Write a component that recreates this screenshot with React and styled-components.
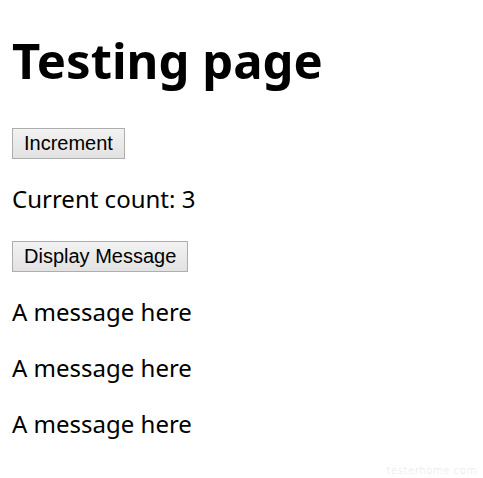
import React, { useState } from 'react';
import styled, { createGlobalStyle } from 'styled-components';

const GlobalStyle = createGlobalStyle`
  body {
    margin: 0 12px;
    background: #fff;
    color: #000;
    font-family: "Noto Sans", "Open Sans", sans-serif;
    font-size: 24px;
    line-height: 32px;
  }
`

const Title = styled.h1`
    font-size: 49px;
    line-height: 56px;
    font-weight: 700;
    margin: 32px 0 40px;
`

// margin-top collapses with the paragraph above, so $gap is the full space
const Button = styled.button`
    display: block;
    margin-top: ${p => p.$gap || 0}px;
    font-family: "Liberation Sans", Arial, sans-serif;
    font-size: 20px;
    line-height: 23px;
    height: 31px;
    padding: 0 11px;
    color: #000;
    background: linear-gradient(#f2f2f2, #e2e2e2);
    border: 1px solid #adadad;
    border-radius: 0;
    cursor: pointer;
`

const Line = styled.p`
    margin: 24px 0;
`

const Watermark = styled.div`
    position: absolute;
    right: 6px;
    top: 455px;
    font-family: "DejaVu Sans", sans-serif;
    font-weight: 200;
    font-size: 10px;
    color: #e4e4e4;
    letter-spacing: 0.6px;
`

export default function App() {
  const [count, setCount] = useState(3);
  const [messages, setMessages] = useState(['A message here', 'A message here', 'A message here']);

  return (
    <>
      <GlobalStyle />
      <Title>Testing page</Title>
      <Button onClick={() => setCount(count + 1)}>Increment</Button>
      <Line>Current count: {count}</Line>
      <Button $gap={26} onClick={() => setMessages([...messages, 'A message here'])}>Display Message</Button>
      {messages.map((m, i) => <Line key={i}>{m}</Line>)}
      <Watermark>testerhome.com</Watermark>
    </>
  );
}
